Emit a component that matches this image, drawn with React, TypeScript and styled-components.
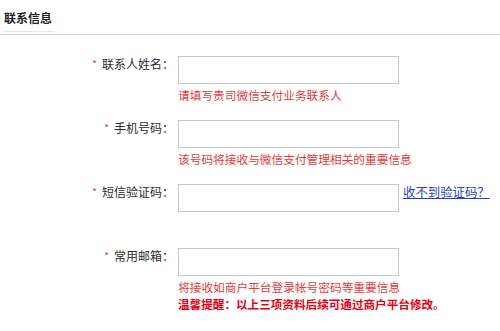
import styled, { createGlobalStyle } from 'styled-components';

const GlobalStyle = createGlobalStyle`
  html, body {
    margin: 0;
    padding: 0;
    background: #fff;
  }
  body {
    font-family: "Noto Sans CJK SC", "Liberation Sans", sans-serif;
    color: #333;
  }
`;

const Page = styled.div`
  width: 500px;
  height: 331px;
  overflow: hidden;
`;

const SectionHeader = styled.div`
  height: 34px;
  border-bottom: 1px solid #d4d4d4;
  box-sizing: content-box;
  padding-left: 4px;
`;

const SectionTitle = styled.h3`
  position: relative;
  display: inline-block;
  margin: 0;
  padding-top: 10px;
  font-size: 12px;
  line-height: 16px;
  font-weight: 700;
  color: #222;

  &::after {
    content: '';
    position: absolute;
    left: -1px;
    right: -2px;
    top: 31px;
    height: 1px;
    background: #e6e6e6;
  }
`;

const Form = styled.div`
  display: flex;
  flex-direction: column;
  gap: 17px;
  padding-top: 21px;
`;

const Row = styled.div`
  display: grid;
  grid-template-columns: 174px 221px auto;
  column-gap: 4px;
  align-items: start;
`;

const Label = styled.label`
  text-align: right;
  font-size: 12px;
  line-height: 16px;
  color: #2b2b2b;
  white-space: nowrap;
`;

const Required = styled.span`
  color: #e4393c;
  font-size: 10px;
  margin-right: 5px;
  vertical-align: 1px;
`;

const Field = styled.div`
  display: flex;
  flex-direction: column;
  min-height: 47px;
`;

const Input = styled.input`
  box-sizing: border-box;
  width: 221px;
  height: 28px;
  margin: 0;
  padding: 0 6px;
  border: 1px solid #c9c9c9;
  background: #fff;
  outline: none;
  font-family: inherit;
  font-size: 12px;
`;

const Hint = styled.div<{ $strong?: boolean }>`
  margin-top: ${(p) => (p.$strong ? '1px' : '3px')};
  font-size: ${(p) => (p.$strong ? '11.6px' : '11.7px')};
  line-height: 16px;
  font-weight: ${(p) => (p.$strong ? 700 : 400)};
  color: ${(p) => (p.$strong ? '#e60012' : '#e23a3a')};
  white-space: nowrap;
`;

const HelpLink = styled.a`
  font-size: 12.4px;
  line-height: 16px;
  color: #2a3fc4;
  text-decoration: underline;
  white-space: nowrap;
  cursor: pointer;
`;

type FieldDef = {
  label: string;
  hint?: string;
  link?: string;
  tip?: string;
};

const fields: FieldDef[] = [
  { label: '联系人姓名：', hint: '请填写贵司微信支付业务联系人' },
  { label: '手机号码：', hint: '该号码将接收与微信支付管理相关的重要信息' },
  { label: '短信验证码：', link: '收不到验证码？' },
  {
    label: '常用邮箱：',
    hint: '将接收如商户平台登录帐号密码等重要信息',
    tip: '温馨提醒：以上三项资料后续可通过商户平台修改。',
  },
];

export default function App() {
  return (
    <Page>
      <GlobalStyle />
      <SectionHeader>
        <SectionTitle>联系信息</SectionTitle>
      </SectionHeader>
      <Form>
        {fields.map((f) => (
          <Row key={f.label}>
            <Label>
              <Required>*</Required>
              {f.label}
            </Label>
            <Field>
              <Input type="text" />
              {f.hint && <Hint>{f.hint}</Hint>}
              {f.tip && <Hint $strong>{f.tip}</Hint>}
            </Field>
            {f.link && <HelpLink>{f.link}</HelpLink>}
          </Row>
        ))}
      </Form>
    </Page>
  );
}
